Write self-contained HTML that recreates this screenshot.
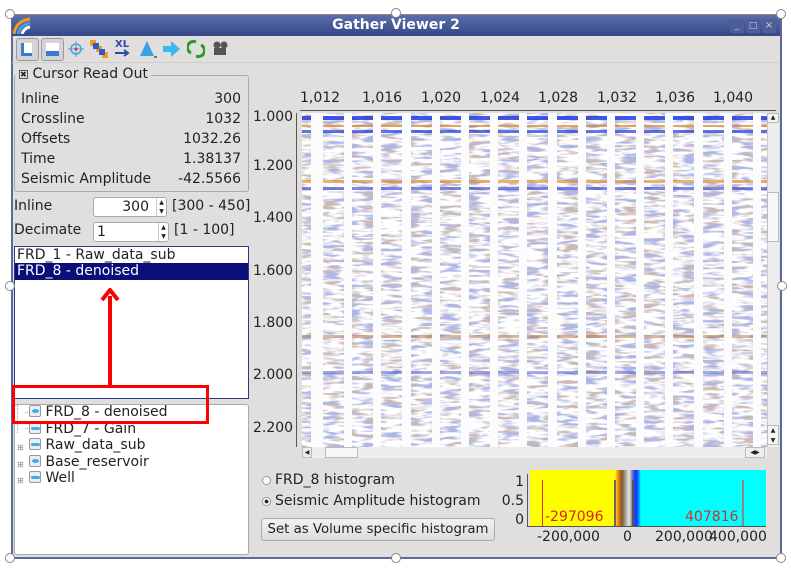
<!DOCTYPE html>
<html><head><meta charset="utf-8"><style>
*{margin:0;padding:0;box-sizing:border-box}
body{width:791px;height:569px;background:#fff;font-family:"DejaVu Sans","Liberation Sans",sans-serif;font-size:14px;color:#222;position:relative;overflow:hidden}
.a{position:absolute}
.win{left:11px;top:14px;width:771px;height:545px;background:#e0dfde;border:2px solid #5a6aa0;border-top:1px solid #888}
.title{left:12px;top:15px;width:768px;height:21px;background:linear-gradient(#5b6ea8,#34478a);color:#fff;font-weight:bold;font-size:14px;text-align:center;line-height:21px}
.handle{width:10px;height:10px;border:1.5px solid #888;border-radius:50%;background:#fff}
.grp{border:1px solid #aaa;border-radius:3px}
.box{background:#fff;border:1px solid #2a3a8a}
.g{position:absolute;top:0;height:334px;width:21px;
background:
linear-gradient(180deg,transparent 0,transparent 3px,rgba(30,60,230,.85) 3px,rgba(30,60,230,.85) 7px,transparent 7px,transparent 12px,rgba(220,130,30,.7) 12px,rgba(220,130,30,.7) 14px,transparent 14px,transparent 17px,rgba(30,60,220,.7) 17px,rgba(30,60,220,.7) 20px,transparent 20px,transparent 67px,rgba(220,130,30,.6) 67px,rgba(220,130,30,.6) 70px,transparent 70px,transparent 74px,rgba(40,60,220,.6) 74px,rgba(40,60,220,.6) 77px,transparent 77px,transparent 222px,rgba(180,110,60,.5) 222px,rgba(180,110,60,.5) 225px,transparent 225px,transparent 258px,rgba(50,70,200,.45) 258px,rgba(50,70,200,.45) 261px,transparent 261px)}
</style></head><body>
<div class="a win"></div>
<div class="a title">Gather Viewer 2</div>
<svg class="a" style="left:13px;top:17px" width="18" height="17"><path d="M1 17 Q3 4 17 2" stroke="#f39a1e" stroke-width="3" fill="none"/><path d="M5 17 Q7 8 17 6" stroke="#4aa0e0" stroke-width="3" fill="none"/><path d="M9 17 Q11 11 17 10" stroke="#fff" stroke-width="3" fill="none"/></svg>
<div class="a" style="left:730px;top:19px;width:14px;height:14px;background:#4d5f98;border-radius:2px;color:#ccd;font-size:9px;text-align:center;line-height:14px">_</div>
<div class="a" style="left:746px;top:19px;width:14px;height:14px;background:#4d5f98;border-radius:2px;color:#ccd;font-size:9px;text-align:center;line-height:14px">□</div>
<div class="a" style="left:762px;top:19px;width:14px;height:14px;background:#4d5f98;border-radius:2px;color:#ccd;font-size:10px;text-align:center;line-height:14px">×</div>
<div class="a" style="left:12px;top:36px;width:768px;height:27px;border-bottom:1px solid #cfcfcf"></div>
<div class="a" style="left:16px;top:38px;width:23px;height:23px;border:1px solid #999;border-radius:3px;background:#d4d4d4"></div>
<div class="a" style="left:21px;top:43px;width:11px;height:13px;border-left:3px solid #3a7cd0;border-bottom:3px solid #3a7cd0;background:#fff"></div>
<div class="a" style="left:41px;top:38px;width:23px;height:23px;border:1px solid #999;border-radius:3px;background:#d4d4d4"></div>
<div class="a" style="left:46px;top:43px;width:13px;height:13px;background:linear-gradient(#fff 60%,#3a7cd0 60%)"></div>
<svg class="a" style="left:67px;top:40px" width="18" height="18"><circle cx="9" cy="9" r="5" stroke="#4aa0e0" fill="none" stroke-width="1.5"/><path d="M9 1V17M1 9H17" stroke="#4aa0e0"/><circle cx="9" cy="9" r="1.5" fill="#e03030"/></svg>
<svg class="a" style="left:90px;top:40px" width="18" height="18"><rect x="0" y="0" width="6" height="6" fill="#f39a1e"/><rect x="6" y="6" width="6" height="6" fill="#f39a1e"/><rect x="12" y="12" width="6" height="6" fill="#f39a1e"/><rect x="3" y="3" width="6" height="6" fill="#2a5ad0"/><rect x="9" y="9" width="6" height="6" fill="#2a5ad0"/></svg>
<div class="a" style="left:115px;top:39px;font-size:10px;font-weight:bold;color:#2a4ab0">XL</div>
<svg class="a" style="left:114px;top:49px" width="20" height="10"><path d="M1 4H14M10 1L14 4L10 7" stroke="#2a4ab0" stroke-width="2" fill="none"/></svg>
<svg class="a" style="left:138px;top:40px" width="20" height="20"><path d="M9 1L2 16H16Z" fill="#3aa0e8"/><path d="M16 17h3" stroke="#000"/></svg>
<svg class="a" style="left:162px;top:40px" width="22" height="20"><path d="M1 6H9V1L18 9L9 17V12H1Z" fill="#3ab8f0"/></svg>
<svg class="a" style="left:187px;top:39px" width="18" height="20"><path d="M4 14A6 6 0 0 1 9 3M14 6A6 6 0 0 1 9 17" stroke="#2a9a2a" stroke-width="3" fill="none"/></svg>
<svg class="a" style="left:211px;top:40px" width="18" height="18"><circle cx="6" cy="5" r="3.5" fill="#555"/><circle cx="13" cy="5" r="3.5" fill="#555"/><rect x="3" y="8" width="12" height="7" fill="#555"/></svg>
<div class="a grp" style="left:14px;top:75px;width:235px;height:117px"></div>
<div class="a" style="left:16px;top:66px;background:#e0dfde;padding:0 3px"><span style="display:inline-block;width:9px;height:9px;border:1px solid #555;font-size:8px;line-height:7px;text-align:center;vertical-align:1px">✖</span> Cursor Read Out</div>
<div class="a" style="left:21px;top:89px;line-height:20px;">Inline<br>Crossline<br>Offsets<br>Time<br>Seismic Amplitude</div>
<div class="a" style="left:140px;top:89px;width:101px;line-height:20px;text-align:right">300<br>1032<br>1032.26<br>1.38137<br>-42.5566</div>
<div class="a" style="left:14px;top:198px">Inline</div>
<div class="a" style="left:93px;top:197px;width:74px;height:20px;background:#fff;border:1px solid #aaa;border-radius:3px;text-align:right;padding-right:17px;line-height:18px">300</div>
<div class="a" style="left:156px;top:198px;width:10px;height:18px;border-left:1px solid #ccc;font-size:6px;line-height:9px;text-align:center">▲<br>▼</div>
<div class="a" style="left:172px;top:198px">[300 - 450]</div>
<div class="a" style="left:14px;top:222px">Decimate</div>
<div class="a" style="left:93px;top:222px;width:76px;height:20px;background:#fff;border:1px solid #aaa;border-radius:3px;padding-left:3px;line-height:18px">1</div>
<div class="a" style="left:158px;top:223px;width:10px;height:18px;border-left:1px solid #ccc;font-size:6px;line-height:9px;text-align:center">▲<br>▼</div>
<div class="a" style="left:174px;top:222px">[1 - 100]</div>
<div class="a box" style="left:14px;top:246px;width:235px;height:153px"></div>
<div class="a" style="left:17px;top:247px">FRD_1 - Raw_data_sub</div>
<div class="a" style="left:15px;top:263px;width:233px;height:17px;background:#0a0e78;color:#fff;padding-left:2px;line-height:17px">FRD_8 - denoised</div>
<div class="a grp" style="left:14px;top:404px;width:235px;height:151px;background:#fff"></div>
<div class="a" style="left:25px;top:412px;width:7px;border-top:1px dotted #aaa"></div>
<div class="a" style="left:25px;top:428px;width:7px;border-top:1px dotted #aaa"></div>
<div class="a" style="left:17px;top:405px;height:28px;border-left:1px dotted #aaa"></div>
<div class="a" style="left:29px;top:404px;line-height:16.5px">
<div><span style="display:inline-block;width:12px;height:12px;border:1px solid #999;border-radius:2px;background:#eee;vertical-align:-1px;position:relative"><span style="position:absolute;left:2px;top:3px;width:7px;height:4px;background:#3ab0e8;border-radius:50%"></span></span> FRD_8 - denoised</div>
<div><span style="display:inline-block;width:12px;height:12px;border:1px solid #999;border-radius:2px;background:#eee;vertical-align:-1px;position:relative"><span style="position:absolute;left:1px;top:4px;width:9px;height:3px;background:#3ab0e8;border-radius:2px"></span></span> FRD_7 - Gain</div>
<div><span style="display:inline-block;width:12px;height:12px;border:1px solid #999;border-radius:2px;background:#eee;vertical-align:-1px;position:relative"><span style="position:absolute;left:1px;top:4px;width:9px;height:3px;background:#3ab0e8;border-radius:2px"></span></span> Raw_data_sub</div>
<div><span style="display:inline-block;width:12px;height:12px;border:1px solid #999;border-radius:2px;background:#eee;vertical-align:-1px;position:relative"><span style="position:absolute;left:2px;top:3px;width:7px;height:4px;background:#3ab0e8;border-radius:50%"></span></span> Base_reservoir</div>
<div><span style="display:inline-block;width:12px;height:12px;border:1px solid #999;border-radius:2px;background:#eee;vertical-align:-1px;position:relative"><span style="position:absolute;left:1px;top:4px;width:9px;height:3px;background:#3ab0e8;border-radius:2px"></span></span> Well</div>
</div>
<div class="a" style="left:17px;top:440px;font-size:8px;color:#888;line-height:16.5px">⊞<br>⊞<br>⊞</div>
<div class="a" style="left:12px;top:385px;width:197px;height:39px;border:3px solid #f00"></div>
<div class="a" style="left:108px;top:296px;width:4px;height:89px;background:#f00"></div>
<svg class="a" style="left:100px;top:288px" width="20" height="14"><path d="M2 12L10 2L18 12" stroke="#f00" stroke-width="4" fill="none"/></svg>
<div class="a" style="left:300px;top:90px;width:480px">
<span class="a" style="left:0px">1,012</span><span class="a" style="left:62px">1,016</span><span class="a" style="left:121px">1,020</span><span class="a" style="left:180px">1,024</span><span class="a" style="left:238px">1,028</span><span class="a" style="left:297px">1,032</span><span class="a" style="left:355px">1,036</span><span class="a" style="left:413px">1,040</span></div>
<div class="a" style="left:300px;top:110px;width:476px;border-top:1px solid #555"></div>
<div class="a" style="left:296px;top:113px;height:334px;border-left:1px solid #555"></div>
<div class="a" style="left:253px;top:110px;font-size:14px;line-height:1">
<div class="a" style="top:0">1.000</div><div class="a" style="top:49px">1.200</div><div class="a" style="top:101px">1.400</div><div class="a" style="top:154px">1.600</div><div class="a" style="top:206px">1.800</div><div class="a" style="top:258px">2.000</div><div class="a" style="top:311px">2.200</div></div>
<div class="a" style="left:302px;top:113px;width:465px;height:334px;background:#fdfdfd;overflow:hidden">
<svg class="a" style="left:0;top:0" width="465" height="334">
<defs><filter id="f" x="0" y="0" width="100%" height="100%">
<feTurbulence type="fractalNoise" baseFrequency="0.05 0.28" numOctaves="2" seed="3" result="n1"/>
<feColorMatrix in="n1" type="matrix" values="0 0 0 0 0.55  0 0 0 0 0.42  0 0 0 0 0.38  5 0 0 0 -2.5" result="b"/>
<feTurbulence type="fractalNoise" baseFrequency="0.05 0.28" numOctaves="2" seed="9" result="n2"/>
<feColorMatrix in="n2" type="matrix" values="0 0 0 0 0.35  0 0 0 0 0.40  0 0 0 0 0.75  5 0 0 0 -2.5" result="c"/>
<feMerge><feMergeNode in="b"/><feMergeNode in="c"/></feMerge>
</filter></defs>
<rect width="465" height="334" fill="#fff"/>
<rect width="465" height="334" filter="url(#f)" opacity="0.85"/>
<g fill="#fcfcfc">
<rect x="9" y="0" width="12" height="334"/>
<rect x="42" width="8" height="334"/><rect x="71" width="8" height="334"/><rect x="100" width="9" height="334"/><rect x="130" width="8" height="334"/><rect x="159" width="8" height="334"/><rect x="188" width="8" height="334"/><rect x="217" width="8" height="334"/><rect x="246" width="9" height="334"/><rect x="276" width="8" height="334"/><rect x="305" width="8" height="334"/><rect x="334" width="8" height="334"/><rect x="363" width="8" height="334"/><rect x="392" width="9" height="334"/><rect x="422" width="8" height="334"/><rect x="451" width="8" height="334"/>
</g></svg>
<div class="g" style="left:0;width:9px"></div>
<div class="g" style="left:21px"></div><div class="g" style="left:50px"></div><div class="g" style="left:79px"></div><div class="g" style="left:109px"></div><div class="g" style="left:138px"></div><div class="g" style="left:167px"></div><div class="g" style="left:196px"></div><div class="g" style="left:225px"></div><div class="g" style="left:255px"></div><div class="g" style="left:284px"></div><div class="g" style="left:313px"></div><div class="g" style="left:342px"></div><div class="g" style="left:371px"></div><div class="g" style="left:401px"></div><div class="g" style="left:430px"></div><div class="g" style="left:459px"></div>
</div>
<div class="a" style="left:767px;top:113px;width:12px;height:334px;background:#ededed;border-left:1px solid #ccc"></div>
<div class="a" style="left:767px;top:192px;width:12px;height:50px;background:#f6f6f6;border:1px solid #bbb"></div>
<div class="a" style="left:767px;top:113px;width:12px;height:10px;font-size:6px;text-align:center;border:1px solid #bbb;background:#f4f4f4">▲</div>
<div class="a" style="left:767px;top:425px;width:12px;height:20px;font-size:6px;line-height:10px;text-align:center;border:1px solid #bbb;background:#f4f4f4">▲<br>▼</div>
<div class="a" style="left:302px;top:447px;width:465px;height:11px;background:#ededed"></div>
<div class="a" style="left:325px;top:447px;width:33px;height:11px;background:#f6f6f6;border:1px solid #bbb"></div>
<div class="a" style="left:302px;top:447px;width:10px;height:11px;font-size:6px;line-height:9px;text-align:center;border:1px solid #bbb">◀</div>
<div class="a" style="left:745px;top:447px;width:20px;height:11px;font-size:6px;line-height:9px;text-align:center;border:1px solid #bbb">◀▶</div>
<div class="a" style="left:262px;top:476px;width:9px;height:9px;border:1px solid #999;border-radius:50%;background:#fff"></div>
<div class="a" style="left:275px;top:472px">FRD_8 histogram</div>
<div class="a" style="left:262px;top:497px;width:9px;height:9px;border:1px solid #999;border-radius:50%;background:radial-gradient(#222 35%,#fff 40%)"></div>
<div class="a" style="left:275px;top:493px">Seismic Amplitude histogram</div>
<div class="a" style="left:261px;top:518px;width:234px;height:23px;border:1px solid #aaa;border-radius:3px;background:linear-gradient(#f2f2f2,#dcdcdc);text-align:center;line-height:21px;white-space:nowrap;font-size:13.3px">Set as Volume specific histogram</div>
<div class="a" style="left:530px;top:470px;width:236px;height:56px;background:linear-gradient(90deg,#ff0 0,#ff0 36%,#f8a020 37%,#d07010 38%,#7a5a30 39%,#bbb 41%,#e8e8e8 42%,#999 43%,#3050e0 44%,#1030ff 45%,#08f 46%,#0ff 47%,#0ff 100%)"></div>
<div class="a" style="left:542px;top:480px;width:1px;height:46px;background:#e03020"></div>
<div class="a" style="left:742px;top:480px;width:2px;height:46px;background:#888"></div>
<div class="a" style="left:614px;top:480px;width:2px;height:46px;background:#666"></div>
<div class="a" style="left:632px;top:480px;width:2px;height:46px;background:#555"></div>
<div class="a" style="left:545px;top:509px;color:#e02020;font-size:14px">-297096</div>
<div class="a" style="left:685px;top:509px;color:#d03030;font-size:14px">407816</div>
<div class="a" style="left:500px;top:473px;width:24px;text-align:right;font-size:14px;line-height:19px">1<br>0.5<br>0</div>
<div class="a" style="left:527px;top:474px;height:52px;border-left:1px solid #555"></div>
<div class="a" style="left:527px;top:526px;width:239px;border-top:1px solid #555"></div>
<div class="a" style="left:537px;top:529px;font-size:14px">-200,000</div>
<div class="a" style="left:623px;top:529px;font-size:14px">0</div>
<div class="a" style="left:655px;top:529px;font-size:14px">200,000</div>
<div class="a" style="left:709px;top:529px;font-size:14px">400,000</div>
<div class="a handle" style="left:5px;top:9px"></div>
<div class="a handle" style="left:391px;top:8px"></div>
<div class="a handle" style="left:776px;top:9px"></div>
<div class="a handle" style="left:5px;top:281px"></div>
<div class="a handle" style="left:777px;top:281px"></div>
<div class="a handle" style="left:5px;top:553px"></div>
<div class="a handle" style="left:391px;top:553px"></div>
<div class="a handle" style="left:776px;top:553px"></div>
</body></html>
